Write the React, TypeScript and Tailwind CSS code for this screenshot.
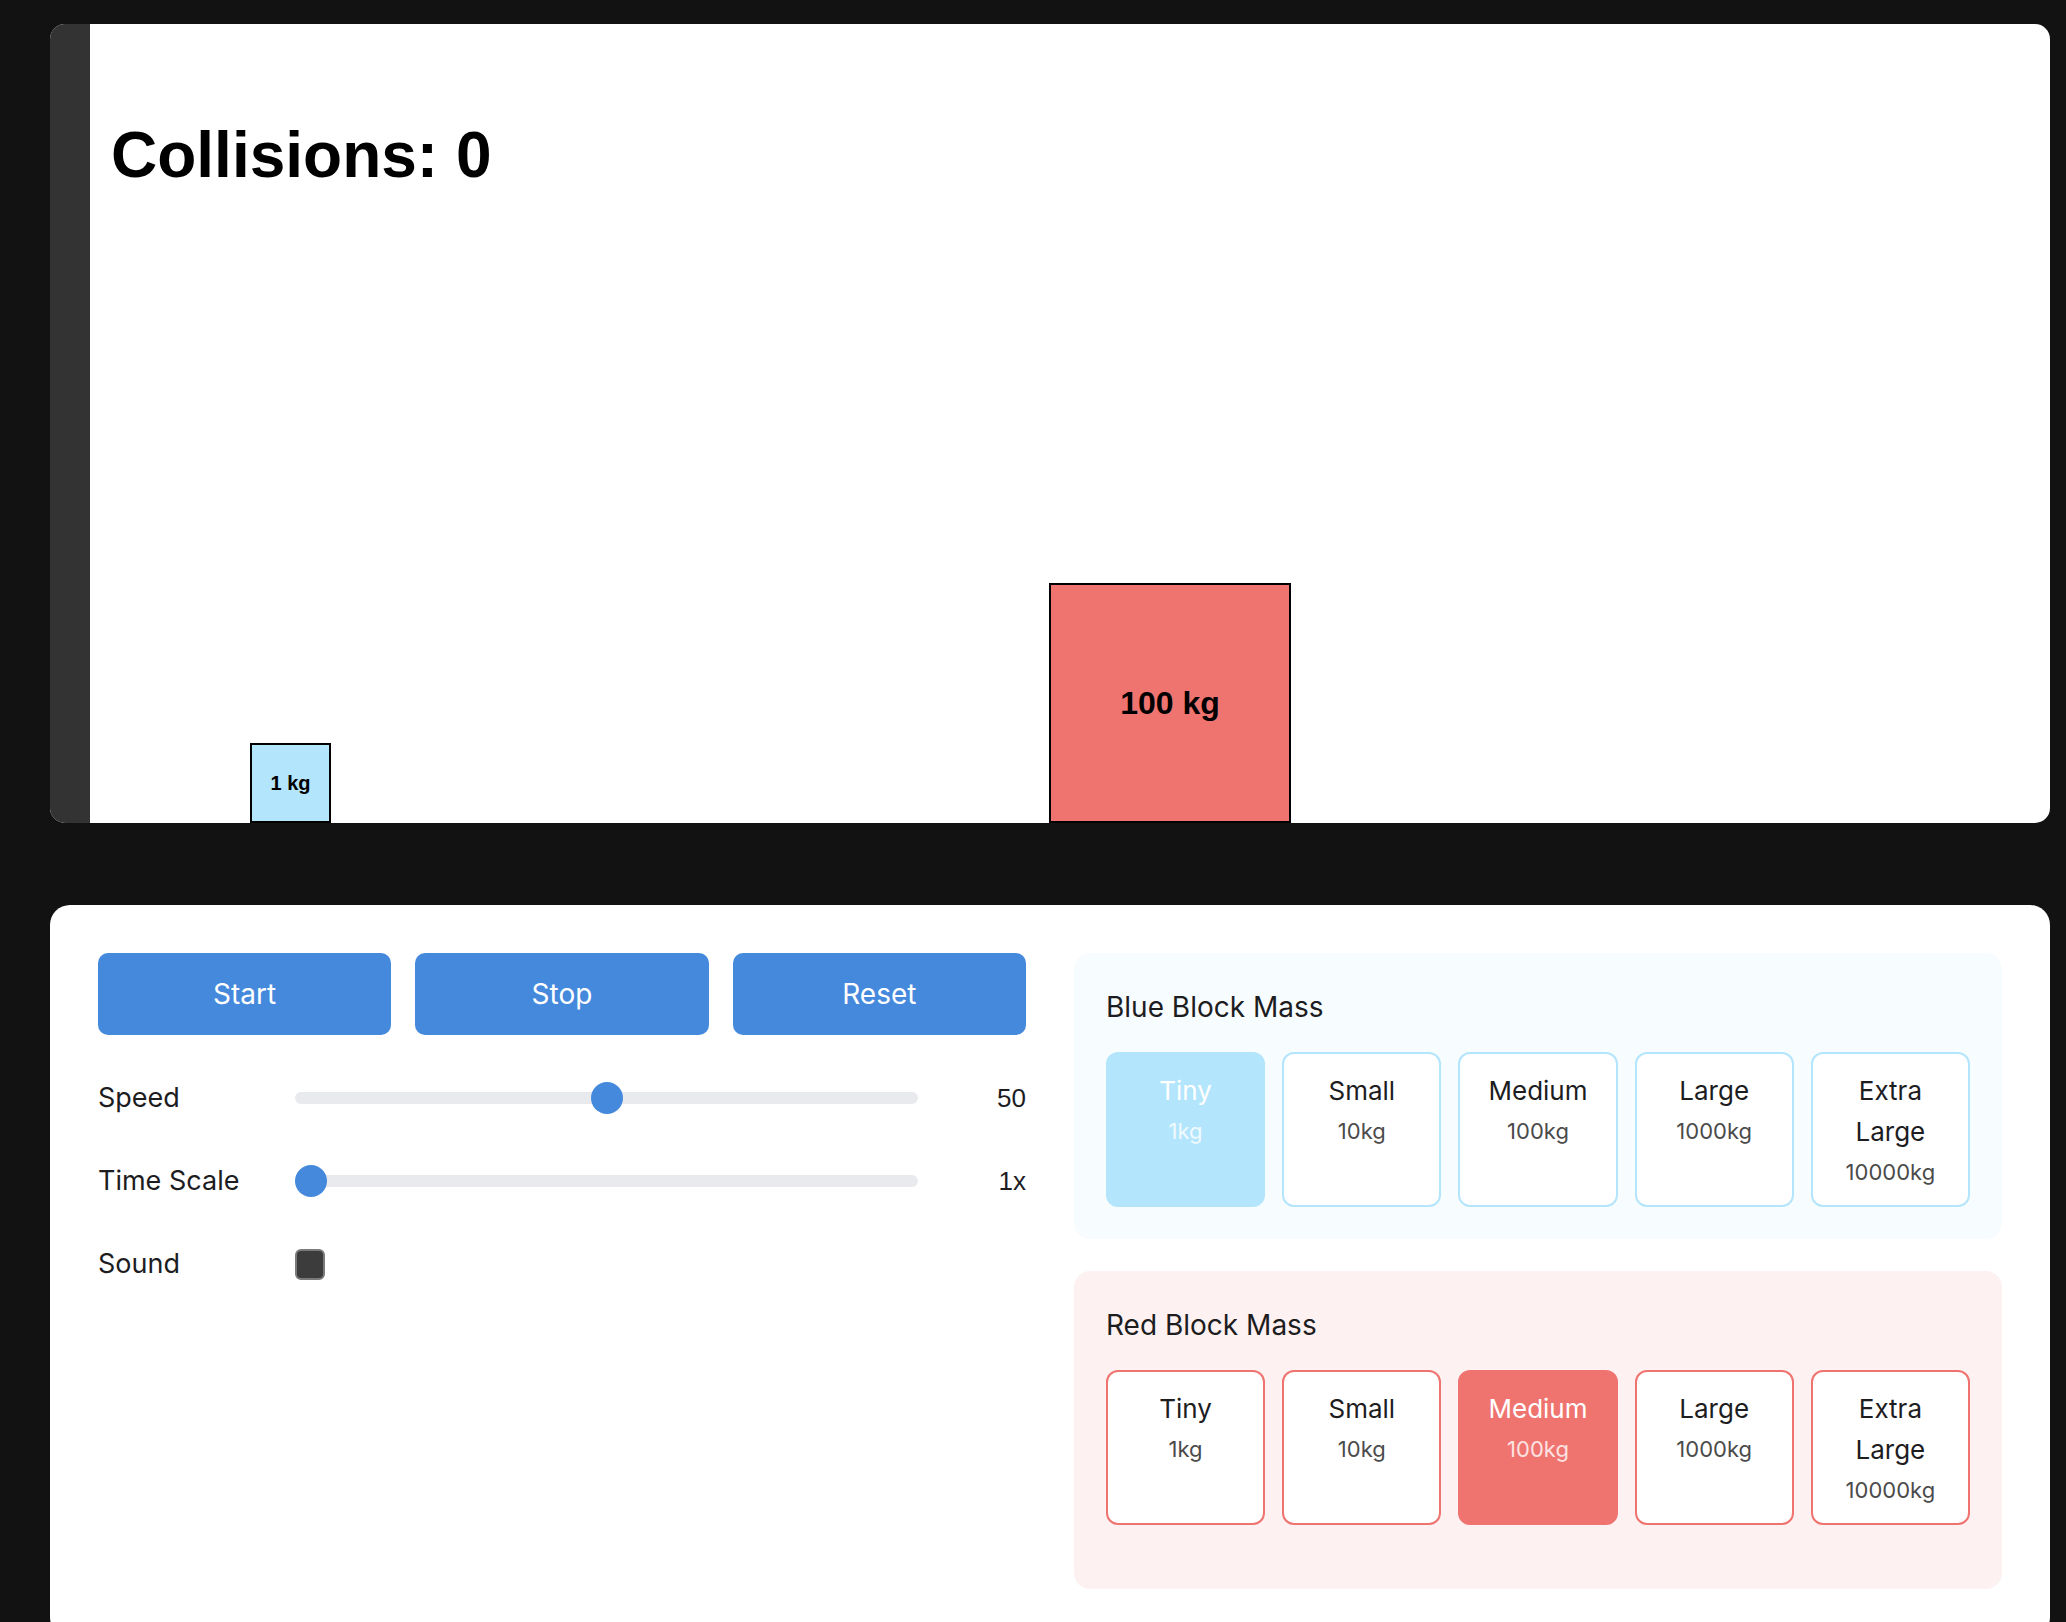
import { useState } from 'react';

type MassOption = {
    label: string;
    kg: number;
}

const massOptions: MassOption[] = [
    { label: 'Tiny', kg: 1 },
    { label: 'Small', kg: 10 },
    { label: 'Medium', kg: 100 },
    { label: 'Large', kg: 1000 },
    { label: 'Extra Large', kg: 10000 },
]

const Slider = ({ value, min, max }: { value: number, min: number, max: number }) => {
    const pct = (value - min) / (max - min)
    return (
        <div className="relative flex-1 h-[32px] flex items-center">
            <div className="w-full h-[12px] rounded-full bg-[#e9eaee]" />
            <div
                className="absolute top-0 w-[32px] h-[32px] rounded-full bg-[#4589dd]"
                style={{ left: `calc(${pct} * (100% - 32px))` }}
            />
        </div>
    )
}

const ControlRow = ({ label, children, value }: { label: string, children: React.ReactNode, value?: string }) => {
    return (
        <div className="flex items-center h-[50px]">
            <div className="w-[197px] text-[27px] text-[#1d1d1f]">{label}</div>
            {children}
            {value !== undefined && (
                <div className="w-[108px] text-right text-[26px] text-[#1d1d1f] font-['Liberation_Sans',Arial,sans-serif]">
                    {value}
                </div>
            )}
        </div>
    )
}

const MassPanel = ({ title, selected, tone, onPick }: {
    title: string, selected: number, tone: 'blue' | 'red', onPick: (i: number) => void
}) => {
    const isBlue = tone === 'blue'
    return (
        <div className={isBlue
            ? 'rounded-[16px] bg-[#f7fcff] px-8 pt-8 pb-8'
            : 'rounded-[16px] bg-[#fdf1f1] px-8 pt-8 pb-16'}>
            <div className="text-[28px] leading-[44px] mb-[23px] text-[#1d1d1f]">{title}</div>
            <div className="grid grid-cols-5 gap-[17px]">
                {massOptions.map((opt, index) => {
                    const active = index === selected
                    let cls = 'rounded-[12px] border-2 px-4 pt-4 pb-[18px] flex flex-col items-center text-center '
                    if (isBlue) {
                        cls += active ? 'bg-[#b3e5fc] border-[#b3e5fc]' : 'bg-white border-[#b3e5fc]'
                    } else {
                        cls += active ? 'bg-[#ef7470] border-[#ef7470]' : 'bg-white border-[#ef7470]'
                    }
                    return (
                        <button key={opt.label} className={cls} onClick={() => onPick(index)}>
                            <span className={active
                                ? 'text-[26px] leading-[41px] text-white'
                                : 'text-[26px] leading-[41px] text-[#1d1d1f]'}>{opt.label}</span>
                            <span className={active
                                ? 'mt-[5px] text-[22px] leading-[30px] text-white/80'
                                : 'mt-[5px] text-[22px] leading-[30px] text-[#4b4b4b]'}>{opt.kg}kg</span>
                        </button>
                    )
                })}
            </div>
        </div>
    )
}

export default function App() {
    const [blueIdx, setBlueIdx] = useState(0)
    const [redIdx, setRedIdx] = useState(2)
    const [collisions] = useState(0)

    const blueKg = massOptions[blueIdx].kg
    const redKg = massOptions[redIdx].kg

    return (
        <div className="h-screen overflow-hidden bg-[#121212] pl-[50px] pt-[24px] font-['Inter','Noto_Sans',sans-serif]">
            <div className="w-[2000px]">
                {/* simulation canvas */}
                <div className="relative h-[799px] bg-white rounded-[15px] overflow-hidden">
                    <div className="absolute left-0 top-0 bottom-0 w-[40px] bg-[#333333]" />
                    <div className="absolute left-[61px] top-[99px] text-[64px] leading-none font-bold text-black font-['Liberation_Sans',Arial,sans-serif]">
                        Collisions: {collisions}
                    </div>
                    <div className="absolute left-[200px] bottom-0 w-[81px] h-[80px] bg-[#b3e5fc] border-2 border-black flex items-center justify-center">
                        <span className="text-[20px] font-bold text-black font-['Liberation_Sans',Arial,sans-serif]">{blueKg} kg</span>
                    </div>
                    <div className="absolute left-[999px] bottom-0 w-[242px] h-[240px] bg-[#ef7470] border-2 border-black flex items-center justify-center">
                        <span className="text-[32px] font-bold text-black font-['Liberation_Sans',Arial,sans-serif]">{redKg} kg</span>
                    </div>
                </div>

                {/* controls */}
                <div className="mt-[82px] bg-white rounded-[20px] p-12 flex gap-12">
                    <div className="w-[928px] flex flex-col">
                        <div className="grid grid-cols-3 gap-6">
                            <button className="h-[82px] rounded-[10px] bg-[#4589dd] text-white text-[28px]">Start</button>
                            <button className="h-[82px] rounded-[10px] bg-[#4589dd] text-white text-[28px]">Stop</button>
                            <button className="h-[82px] rounded-[10px] bg-[#4589dd] text-white text-[28px]">Reset</button>
                        </div>
                        <div className="mt-[38px] flex flex-col gap-[33px]">
                            <ControlRow label="Speed" value="50">
                                <Slider value={50} min={0} max={100} />
                            </ControlRow>
                            <ControlRow label="Time Scale" value="1x">
                                <Slider value={1} min={1} max={10} />
                            </ControlRow>
                            <ControlRow label="Sound">
                                <div className="w-[30px] h-[31px] rounded-[6px] bg-[#3c3c3c] border-2 border-[#7a7a7a]" />
                            </ControlRow>
                        </div>
                    </div>
                    <div className="w-[928px] flex flex-col gap-8">
                        <MassPanel title="Blue Block Mass" selected={blueIdx} tone="blue" onPick={setBlueIdx} />
                        <MassPanel title="Red Block Mass" selected={redIdx} tone="red" onPick={setRedIdx} />
                    </div>
                </div>
            </div>
        </div>
    )
}
